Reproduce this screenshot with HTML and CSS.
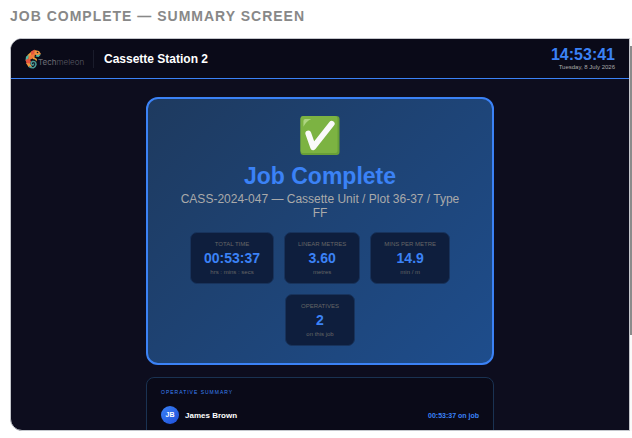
FILE: index.html
```html
<!DOCTYPE html>
<html lang="en">
<head>
  <meta charset="UTF-8" />
  <meta name="viewport" content="width=device-width, initial-scale=1.0"/>
  <title>Job Complete</title>
  <link rel="stylesheet" href="styles.css">
</head>
<body>

  <h2 class="page-title">Job Complete — Summary Screen</h2>

  <div class="viewer">
    <div class="screen">
      <header class="header">
        <div class="logo">
          <svg class="logo-mark" viewBox="0 0 36 40" aria-hidden="true">
            <path d="M6 13 L15 5 L14 16 Z" fill="#e8a33a"/>
            <path d="M4 15 L10 12 L9 23 L3 23 Z" fill="#4fb8a4"/>
            <path d="M14 5 L21 1 L23 10 L14 15 Z" fill="#e8583c"/>
            <path d="M21 2 L30 4 L34 10 L28 13 L21 11 Z" fill="#f2913c"/>
            <path d="M25 12 L34 11 L29 16 L23 15 Z" fill="#55bfa5"/>
            <path d="M9 14 L22 9 L21 17 L13 21 L9 25 Z" fill="#f07a3a"/>
            <path d="M3 22 L9 19 L14 24 L12 32 L5 29 Z" fill="#e5533d"/>
            <path d="M4 28 L12 29 L16 36 L9 36 Z" fill="#ef9a42"/>
            <path d="M19 16 L26 20 L25 25 L22 21 L17 20 Z" fill="#e8a33a"/>
            <path d="M10 35 Q21 42 24 31 Q24 24 17 25 Q12 28 16 32 Q20 32 19 29" fill="none" stroke="#4a9a94" stroke-width="3"/>
            <circle cx="27" cy="7" r="1.6" fill="#14141f"/>
          </svg>
          <span class="logo-text"><b>Tech</b>meleon</span>
        </div>
        <h1 class="station">Cassette Station 2</h1>
        <div class="clock">
          <div class="time">14:53:41</div>
          <div class="date">Tuesday, 8 July 2026</div>
        </div>
      </header>

      <main class="content">
        <section class="complete">
          <svg class="tick" viewBox="0 0 40 40" role="img" aria-label="Complete">
            <rect width="40" height="40" rx="3" fill="#689f38"/>
            <rect width="38" height="38" rx="3" fill="#7cb342"/>
            <path d="M3 11 V5 Q3 3 5 3 H11 Q6 5 3 11 Z" fill="#aed581"/>
            <path d="M8 18 L13 32 L32 8" fill="none" stroke="#fafafa" stroke-width="6" stroke-linecap="round" stroke-linejoin="round"/>
          </svg>
          <h2 class="complete-title">Job Complete</h2>
          <p class="job">CASS-2024-047 — Cassette Unit / Plot 36-37 / Type FF</p>

          <div class="stats">
            <div class="stat">
              <div class="stat-label">Total Time</div>
              <div class="stat-value">00:53:37</div>
              <div class="stat-unit">hrs : mins : secs</div>
            </div>
            <div class="stat">
              <div class="stat-label">Linear Metres</div>
              <div class="stat-value">3.60</div>
              <div class="stat-unit">metres</div>
            </div>
            <div class="stat">
              <div class="stat-label">Mins per Metre</div>
              <div class="stat-value">14.9</div>
              <div class="stat-unit">min / m</div>
            </div>
            <div class="stat">
              <div class="stat-label">Operatives</div>
              <div class="stat-value">2</div>
              <div class="stat-unit">on this job</div>
            </div>
          </div>
        </section>

        <section class="summary">
          <h3 class="summary-title">Operative Summary</h3>
          <div class="operative">
            <span class="avatar">JB</span>
            <span class="name">James Brown</span>
            <span class="on-job">00:53:37 on job</span>
          </div>
        </section>
      </main>
    </div>
    <div class="scroll"><div class="thumb"></div></div>
  </div>

</body>
</html>
```

FILE: styles.css
```css
* {
  box-sizing: border-box;
  margin: 0;
}

body {
  height: 100vh;
  padding: 8px 0 7px 10px;
  display: flex;
  flex-direction: column;
  gap: 13px;
  background: #fff;
  font-family: "Liberation Sans", Arial, sans-serif;
  overflow: hidden;
}

.page-title {
  font-size: 14px;
  line-height: 17px;
  letter-spacing: 1px;
  text-transform: uppercase;
  color: #888;
}

.viewer {
  flex: 1;
  min-height: 0;
  display: flex;
}

.screen {
  flex: 1;
  overflow: hidden;
  border: 1px solid #c4c6cc;
  border-radius: 12px 0 0 12px;
  background: #0d0d1e;
  color: #fff;
}

.scroll {
  width: 2px;
  padding-top: 8px;
  background: #fafafa;
}

.thumb {
  height: 75%;
  background: #8b8b8b;
}

/* header */
.header {
  display: flex;
  align-items: center;
  height: 40px;
  padding: 0 14px 0 13px;
  background: #0a0a18;
  border-bottom: 1px solid #3b82f6;
}

.logo {
  display: flex;
  align-items: center;
  width: 70px;
  height: 18px;
  border-right: 1px solid #1a1c2b;
}

.logo-mark {
  width: 18px;
  height: 20px;
  flex-shrink: 0;
}

.logo-text {
  margin: 6px 0 0 -4px;
  font-family: Inter, sans-serif;
  font-size: 8px;
  font-weight: 300;
  color: #5a5b65;
}

.logo-text b {
  font-weight: 400;
  color: #6c6d77;
}

.station {
  flex: 1;
  margin-left: 10px;
  font-size: 12px;
}

.clock {
  text-align: right;
}

.time {
  font-size: 16px;
  line-height: 17px;
  font-weight: bold;
  color: #3b82f6;
}

.date {
  font-size: 6px;
  line-height: 8px;
  color: #aaa;
}

/* cards */
.content {
  display: flex;
  flex-direction: column;
  align-items: center;
  gap: 12px;
  padding: 18px;
}

.complete {
  width: 100%;
  max-width: 348px;
  padding: 17px 26px;
  border: 2px solid #3b82f6;
  border-radius: 12px;
  background: linear-gradient(135deg, #1e3a5f, #1e4d8c);
  text-align: center;
}

.tick {
  display: block;
  width: 40px;
  height: 39px;
  margin: 0 auto 7px;
}

.complete-title {
  margin-bottom: 2px;
  font-size: 23px;
  line-height: 28px;
  color: #3b82f6;
}

.job {
  margin-bottom: 12px;
  font-size: 12px;
  line-height: 14px;
  color: #aaa;
}

.stats {
  display: flex;
  flex-wrap: wrap;
  justify-content: center;
  gap: 10px;
}

.stat {
  min-width: 70px;
  padding: 7px 13px;
  border: 1px solid #18335c;
  border-radius: 7px;
  background: #0e1e3d;
}

.stat-label {
  font-size: 6px;
  line-height: 8px;
  text-transform: uppercase;
  color: #666;
}

.stat-value {
  font-size: 14px;
  line-height: 20px;
  font-weight: bold;
  color: #3b82f6;
}

.stat-unit {
  font-size: 6px;
  line-height: 8px;
  color: #666;
}

.summary {
  width: 100%;
  max-width: 348px;
  min-height: 90px;
  padding: 10px 14px;
  border: 1px solid #1a3252;
  border-radius: 8px;
  background: #0a0a18;
}

.summary-title {
  margin-bottom: 10px;
  font-size: 5px;
  line-height: 8px;
  font-weight: normal;
  letter-spacing: 1px;
  text-transform: uppercase;
  color: #3b82f6;
}

.operative {
  display: flex;
  align-items: center;
  gap: 6px;
}

.avatar {
  width: 18px;
  border-radius: 50%;
  background: linear-gradient(135deg, #3b82f6, #1d4ed8);
  font-size: 7px;
  line-height: 18px;
  font-weight: bold;
  text-align: center;
}

.name {
  flex: 1;
  font-size: 8px;
  font-weight: bold;
}

.on-job {
  font-size: 7px;
  font-weight: bold;
  color: #3b82f6;
}
```
